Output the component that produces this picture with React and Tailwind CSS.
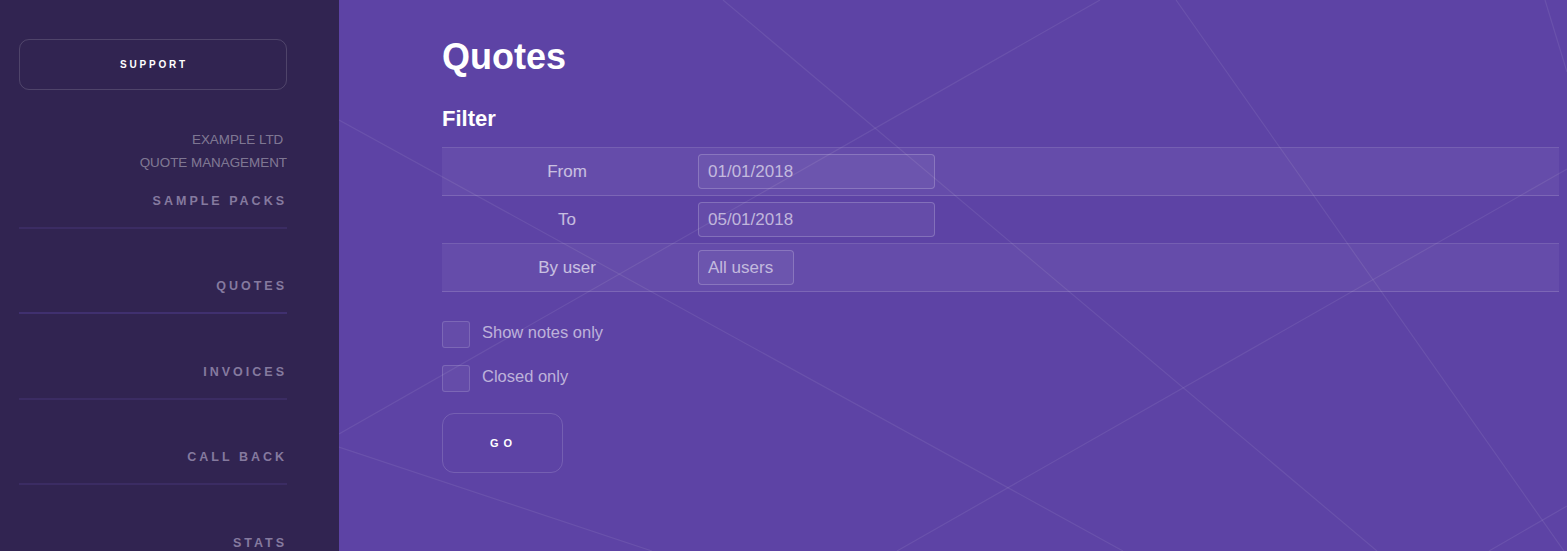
import React from 'react'

const navItems = ['Sample Packs', 'Quotes', 'Invoices', 'Call Back', 'Stats']

const filterRows = [
  { label: 'From', value: '01/01/2018', kind: 'date', shaded: true },
  { label: 'To', value: '05/01/2018', kind: 'date', shaded: false },
  { label: 'By user', value: 'All users', kind: 'select', shaded: true },
]

// faint criss-cross lines behind the main panel
const lines = [
  [384, 0, 1038, 551],
  [761, 0, 0, 434],
  [0, 447, 313, 551],
  [0, 120, 784, 551],
  [837, 0, 1225, 551],
  [1206, 0, 1228, 72],
  [1150, 551, 1228, 506],
  [558, 551, 1228, 169],
]

function Backdrop() {
  return (
    <svg
      className="pointer-events-none absolute inset-0 h-full w-full"
      viewBox="0 0 1228 551"
      preserveAspectRatio="none"
    >
      {lines.map(([x1, y1, x2, y2], i) => (
        <line key={i} x1={x1} y1={y1} x2={x2} y2={y2} stroke="#ffffff" strokeOpacity="0.08" strokeWidth="1.2" />
      ))}
    </svg>
  )
}

function Checkbox({ label }) {
  const [checked, setChecked] = React.useState(false)
  return (
    <label className="flex cursor-pointer items-start" onClick={() => setChecked(!checked)}>
      <span
        className={`h-[27px] w-[28px] rounded-[3px] border border-white/15 ${checked ? 'bg-white/30' : 'bg-white/5'}`}
      />
      <span className="ml-[12px] text-[16.5px] leading-[23px] text-white/60">{label}</span>
    </label>
  )
}

export default function App() {
  const [active, setActive] = React.useState('Quotes')

  return (
    <div className="flex h-screen overflow-hidden font-['Liberation_Sans',Arial,sans-serif]">
      <aside className="w-[339px] shrink-0 overflow-hidden bg-[#312451] pl-[19px] pr-[52px] pt-[39px]">
        <button
          type="button"
          className="block h-[51px] w-full rounded-[10px] border border-white/15 pl-[2px] text-[10px] font-bold tracking-[2.8px] text-white"
        >
          SUPPORT
        </button>

        <div className="mt-[38px] text-right text-[13.4px] leading-[23px] text-white/40">
          <div>EXAMPLE LTD&nbsp;</div>
          <div>QUOTE MANAGEMENT</div>
        </div>

        <nav className="mt-[16.5px]">
          {navItems.map((item, i) => (
            <a
              key={item}
              href="#"
              onClick={(e) => {
                e.preventDefault()
                setActive(item)
              }}
              className={`block border-b-2 pb-[16px] text-right text-[12.5px] font-bold uppercase leading-[20px] tracking-[3px] text-[#857a9f] ${
                i === 0 ? '' : 'pt-[47.5px]'
              } ${active === item ? 'border-[#40306f]' : 'border-[#3b2c63]'}`}
            >
              {item}
            </a>
          ))}
        </nav>
      </aside>

      <main className="relative flex-1 overflow-hidden bg-[#5d43a5] pl-[103px] pr-[8px] pt-[37px]">
        <Backdrop />
        <div className="relative">
          <h1 className="text-[36px] font-bold leading-[40px] text-white">Quotes</h1>
          <h2 className="mt-[28px] text-[22px] font-bold leading-[28px] text-white">Filter</h2>

          <div className="mt-[14px] border-t border-white/15">
            {filterRows.map((row) => (
              <div
                key={row.label}
                className={`flex h-[48px] items-center border-b border-white/15 ${row.shaded ? 'bg-white/5' : ''}`}
              >
                <div className="w-[250px] text-center text-[17px] text-white/65">{row.label}</div>
                <div className="pl-[6px]">
                  {row.kind === 'date' ? (
                    <input
                      type="text"
                      defaultValue={row.value}
                      className="h-[35px] w-[237px] rounded-[4px] border border-white/20 bg-white/5 px-[9px] text-[17px] text-white/60 outline-none"
                    />
                  ) : (
                    <div className="flex h-[35px] w-[96px] items-center rounded-[4px] border border-white/20 bg-white/5 px-[9px] text-[17px] text-white/60">
                      {row.value}
                    </div>
                  )}
                </div>
              </div>
            ))}
          </div>

          <div className="mt-[29px] flex flex-col gap-[17px]">
            <Checkbox label="Show notes only" />
            <Checkbox label="Closed only" />
          </div>

          <button
            type="button"
            className="mt-[21px] h-[60px] w-[121px] rounded-[12px] border border-white/15 pl-[2px] text-[11px] font-bold tracking-[4.9px] text-white"
          >
            GO
          </button>
        </div>
      </main>
    </div>
  )
}
